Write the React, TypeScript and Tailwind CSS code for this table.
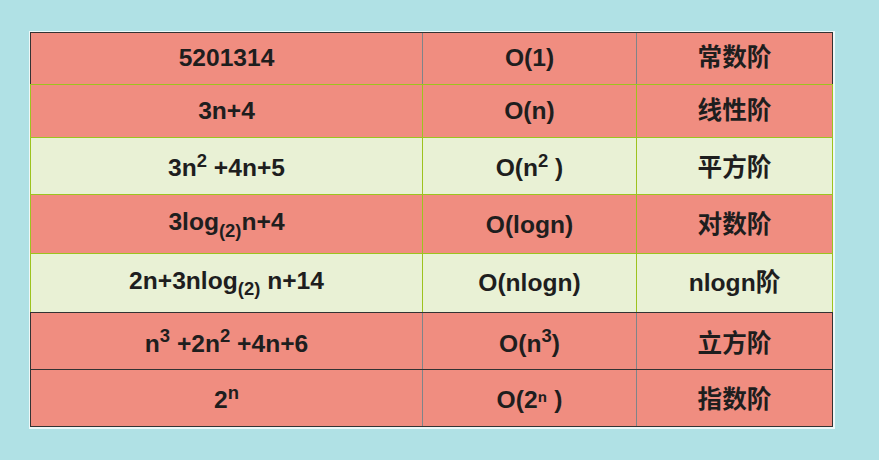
const GREEN = "border-[#9dc31f]"
const GRAY = "border-[#7f8489]"

type Row = {
  cells: React.ReactNode[]
  bg: string
  line: string
  edge: string
  top: string
  h: string
  pad?: string
  firstPad?: string
}

const rows: Row[] = [
  {
    cells: ["5201314", "O(1)", "常数阶"],
    bg: "bg-[#f08d80]",
    line: GRAY,
    edge: "border-[#333]",
    top: "",
    h: "h-[51px]",
  },
  {
    cells: ["3n+4", "O(n)", "线性阶"],
    bg: "bg-[#f08d80]",
    line: GREEN,
    edge: GREEN,
    top: `border-t ${GREEN}`,
    h: "h-[53px]",
  },
  {
    cells: [
      <>3n<sup>2</sup> +4n+5</>,
      <>O(n<sup>2</sup> )</>,
      "平方阶",
    ],
    bg: "bg-[#e9f1d5]",
    line: GREEN,
    edge: GREEN,
    top: `border-t ${GREEN}`,
    h: "h-[57px]",
    pad: "pt-[5px]",
  },
  {
    cells: [
      <>3log<sub className="bottom-[-0.35em]">(2)</sub>n+4</>,
      "O(logn)",
      "对数阶",
    ],
    bg: "bg-[#f08d80]",
    line: GREEN,
    edge: GREEN,
    top: `border-t ${GREEN}`,
    h: "h-[59px]",
    pad: "pt-[2px]",
    firstPad: "pb-[5px]",
  },
  {
    cells: [
      <>2n+3nlog<sub className="bottom-[-0.35em]">(2)</sub> n+14</>,
      "O(nlogn)",
      "nlogn阶",
    ],
    bg: "bg-[#e9f1d5]",
    line: GREEN,
    edge: GREEN,
    top: `border-t ${GREEN}`,
    h: "h-[59px]",
    pad: "pt-[1px]",
    firstPad: "pb-[5px]",
  },
  {
    cells: [
      <>n<sup>3</sup> +2n<sup>2</sup> +4n+6</>,
      <>O(n<sup>3</sup>)</>,
      "立方阶",
    ],
    bg: "bg-[#f08d80]",
    line: GRAY,
    edge: "border-[#333]",
    top: `border-t ${GREEN}`,
    h: "h-[57px]",
    pad: "pt-[6px]",
  },
  {
    cells: [<>2<sup>n</sup></>, "O(2ⁿ )", "指数阶"],
    bg: "bg-[#f08d80]",
    line: GRAY,
    edge: "border-[#333]",
    top: `border-t ${GRAY}`,
    h: "h-[57px]",
    pad: "pt-[5px]",
  },
]

export default function App() {
  return (
    <div className="w-full h-[460px] bg-[#b0e1e5] pt-[31px] pl-[29px]">
      <div className="inline-block border border-r-2 border-b-2 border-[#eef8f8]">
        <div
          className="w-[803px] border-y border-[#333] text-[24.6px] font-bold text-[#1e1e1e]"
          style={{ fontFamily: '"Liberation Sans", Arial, "Noto Sans CJK SC", sans-serif' }}
        >
          {rows.map((r, i) => (
            <div key={i} className={`flex border-x ${r.edge} ${r.top} ${r.h} ${r.bg}`}>
              <div className={`w-[392px] border-r ${r.line} flex items-center justify-center ${r.pad ?? ""} ${r.firstPad ?? ""}`}>
                <span>{r.cells[0]}</span>
              </div>
              <div className={`w-[214px] border-r ${r.line} flex items-center justify-center ${r.pad ?? ""}`}>
                <span>{r.cells[1]}</span>
              </div>
              <div className={`flex-1 flex items-center justify-center ${r.pad ?? ""}`}>
                <span>{r.cells[2]}</span>
              </div>
            </div>
          ))}
        </div>
      </div>
    </div>
  )
}
